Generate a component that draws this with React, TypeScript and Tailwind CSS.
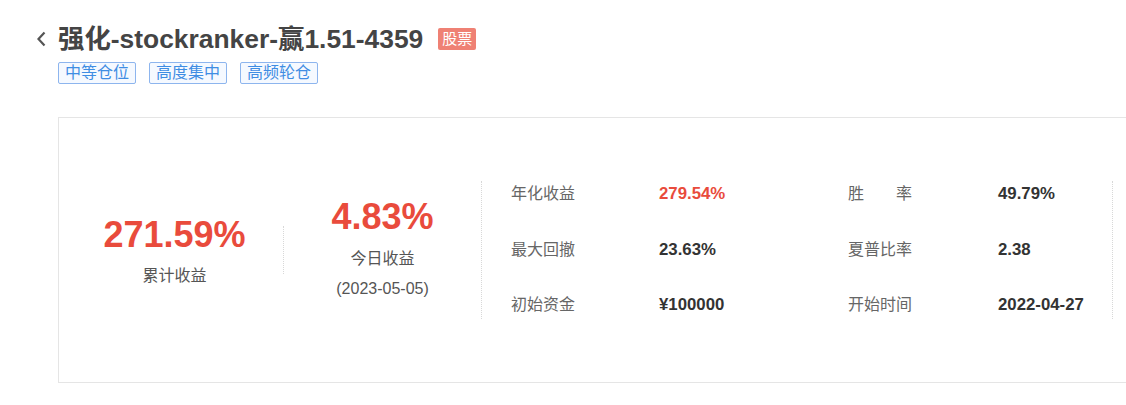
const tags = ["中等仓位", "高度集中", "高频轮仓"];

type Stat = { label: string; value: string; red?: boolean; spread?: boolean };

const rows: [Stat, Stat][] = [
  [
    { label: "年化收益", value: "279.54%", red: true },
    { label: "胜率", value: "49.79%", spread: true },
  ],
  [
    { label: "最大回撤", value: "23.63%" },
    { label: "夏普比率", value: "2.38" },
  ],
  [
    { label: "初始资金", value: "¥100000" },
    { label: "开始时间", value: "2022-04-27" },
  ],
];

function Label({ stat, width }: { stat: Stat; width: string }) {
  if (stat.spread) {
    return (
      <div className={width}>
        <div className="flex w-[64px] justify-between text-[#666]">
          {stat.label.split("").map((c) => (
            <span key={c}>{c}</span>
          ))}
        </div>
      </div>
    );
  }
  return <div className={`${width} text-[#666]`}>{stat.label}</div>;
}

export default function App() {
  return (
    <div className="w-[1126px] h-[405px] overflow-hidden bg-white font-['Liberation_Sans','Noto_Sans_CJK_SC',sans-serif]">
      <header className="pl-[36px] pt-[23px]">
        <div className="flex items-center h-[32px]">
          <svg width="10" height="16" viewBox="0 0 10 16" className="shrink-0">
            <path d="M8.5 1.5 L2.5 8 L8.5 14.5" fill="none" stroke="#555" strokeWidth="2.2" />
          </svg>
          <h1 className="ml-[12px] text-[26.4px] leading-[32px] font-bold text-[#444] whitespace-nowrap">
            强化-stockranker-赢1.51-4359
          </h1>
          <span className="ml-[15px] h-[22px] px-[4px] rounded-[2px] bg-[#ef8174] text-white text-[15px] leading-[22px]">
            股票
          </span>
        </div>
        <div className="flex gap-[13px] mt-[7px] pl-[22px]">
          {tags.map((t) => (
            <span
              key={t}
              className="h-[22px] px-[6px] border border-[#8db5ee] bg-[#f5f9ff] rounded-[2px] text-[16px] leading-[20px] text-[#3f8de3]"
            >
              {t}
            </span>
          ))}
        </div>
      </header>

      {/* summary card */}
      <section className="ml-[58px] mt-[33px] w-[1120px] h-[266px] border border-[#e5e5e5] flex items-center">
        <div className="ml-[7px] w-[217px] pt-[5px] flex flex-col items-center">
          <div className="text-[36px] leading-[36px] font-bold text-[#e94b3c]">271.59%</div>
          <div className="mt-[11px] text-[16px] leading-[24px] text-[#555]">累计收益</div>
        </div>
        <div className="h-[48px] border-l border-dotted border-[#d8d8d8]" />
        <div className="w-[197px] flex flex-col items-center">
          <div className="text-[36px] leading-[36px] font-bold text-[#e94b3c]">4.83%</div>
          <div className="mt-[12px] text-[16px] leading-[24px] text-[#555]">今日收益</div>
          <div className="mt-[6px] text-[16px] leading-[24px] text-[#555]">(2023-05-05)</div>
        </div>
        <div className="w-[632px] h-[138px] border-x border-dotted border-[#d8d8d8] pl-[29px] pt-[1px] flex flex-col gap-[31.5px] text-[16px] leading-[24px]">
          {rows.map(([a, b]) => (
            <div key={a.label} className="flex items-center">
              <Label stat={a} width="w-[148px]" />
              <div className={`w-[189px] font-bold text-[16.8px] ${a.red ? "text-[#e94b3c]" : "text-[#333]"}`}>{a.value}</div>
              <Label stat={b} width="w-[150px]" />
              <div className="font-bold text-[16.8px] text-[#333]">{b.value}</div>
            </div>
          ))}
        </div>
      </section>
    </div>
  );
}
